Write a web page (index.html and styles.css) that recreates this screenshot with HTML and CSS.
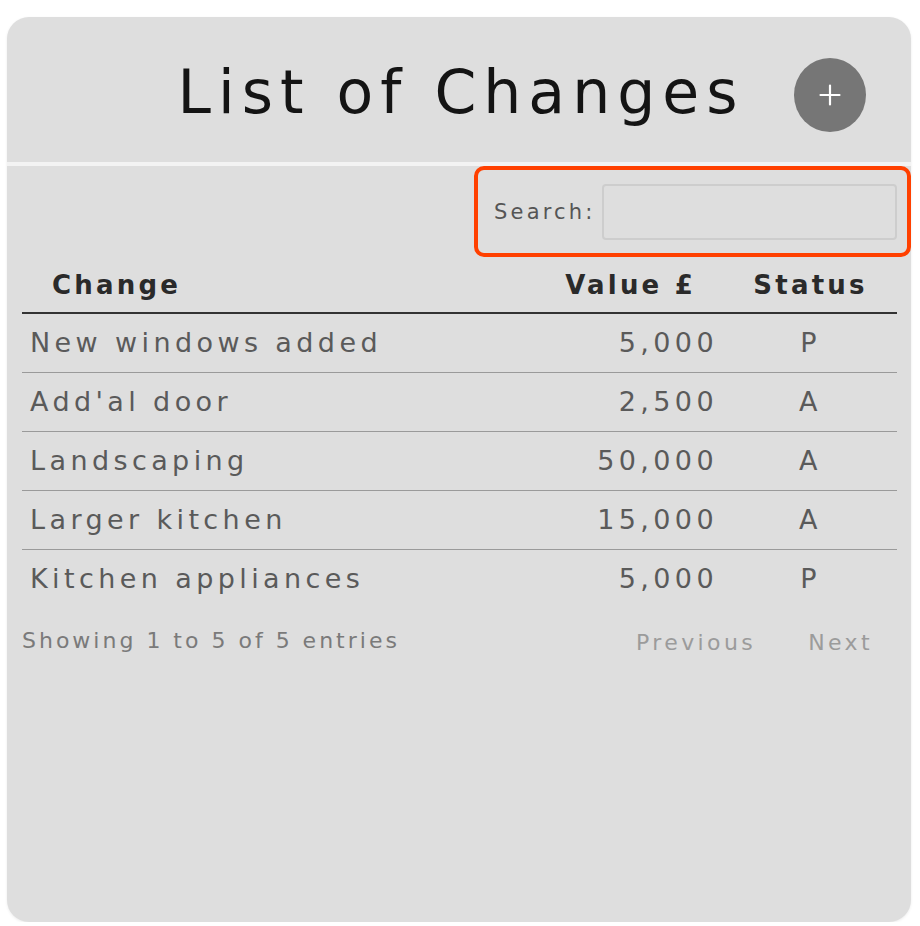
FILE: index.html
```html
<!DOCTYPE html>
<html>
<head>
<meta charset="utf-8">
<link rel="stylesheet" href="styles.css">
</head>
<body>
<div class="card">
  <header class="card-head">
    <div class="spacer"></div>
    <h1 class="title">List of Changes</h1>
    <div class="head-actions">
      <button class="add-btn" aria-label="Add">
        <svg width="24" height="24" viewBox="0 0 24 24"><path d="M12 2.5v19M2.5 12h19" stroke="#fff" stroke-width="2.2" stroke-linecap="round"/></svg>
      </button>
    </div>
  </header>
  <div class="search-row">
    <div class="search-box">
      <label class="search-label" for="q">Search:</label>
      <input id="q" class="search-input" type="text">
    </div>
  </div>
  <table class="changes">
    <thead>
      <tr>
        <th class="c-change">Change</th>
        <th class="c-value">Value £</th>
        <th class="c-status">Status</th>
      </tr>
    </thead>
    <tbody>
      <tr><td class="c-change">New windows added</td><td class="c-value">5,000</td><td class="c-status">P</td></tr>
      <tr><td class="c-change">Add'al door</td><td class="c-value">2,500</td><td class="c-status">A</td></tr>
      <tr><td class="c-change">Landscaping</td><td class="c-value">50,000</td><td class="c-status">A</td></tr>
      <tr><td class="c-change">Larger kitchen</td><td class="c-value">15,000</td><td class="c-status">A</td></tr>
      <tr><td class="c-change">Kitchen appliances</td><td class="c-value">5,000</td><td class="c-status">P</td></tr>
    </tbody>
  </table>
  <div class="table-foot">
    <div class="info">Showing 1 to 5 of 5 entries</div>
    <div class="pager">
      <span class="page-link prev">Previous</span>
      <span class="page-link next">Next</span>
    </div>
  </div>
</div>
</body>
</html>
```

FILE: styles.css
```css
* { box-sizing: border-box; }
html, body { margin: 0; padding: 0; background: #ffffff; }
body {
  font-family: "DejaVu Sans", "Liberation Sans", sans-serif;
  padding: 17px 0 0 7px;
}
.card {
  width: 904px;
  height: 905px;
  background: #dedede;
  border-radius: 22px;
  box-shadow: 0 1px 3px rgba(0,0,0,0.08);
  overflow: hidden;
}
.card-head {
  height: 149px;
  display: grid;
  grid-template-columns: 1fr auto 1fr;
  align-items: center;
  border-bottom: 4px solid #f3f3f3;
}
.title {
  margin: 0;
  font-weight: normal;
  font-size: 60px;
  letter-spacing: 7px;
  color: #141414;
  padding-left: 4px;
  padding-top: 4px;
}
.head-actions {
  display: flex;
  justify-content: flex-end;
  padding-right: 45px;
}
.add-btn {
  width: 72px;
  height: 74px;
  border-radius: 50%;
  border: none;
  background: #767676;
  display: flex;
  align-items: center;
  justify-content: center;
  padding: 0;
  margin-top: 10px;
}
.search-row {
  display: flex;
  justify-content: flex-end;
}
.search-box {
  width: 437px;
  height: 91px;
  border: 4px solid #ff4000;
  border-radius: 10px;
  display: flex;
  align-items: center;
  padding: 0 10px 0 16px;
}
.search-label {
  font-size: 21px;
  letter-spacing: 3.2px;
  color: #555;
  margin-right: 6px;
}
.search-input {
  flex: 1;
  height: 56px;
  border: 2px solid #cdcdcd;
  border-radius: 4px;
  background: #dedede;
}
.changes {
  margin-left: 15px;
  width: 875px;
  border-collapse: collapse;
}
.changes th {
  height: 56px;
  font-size: 26px;
  font-weight: bold;
  letter-spacing: 3.2px;
  color: #2a2a2a;
  border-bottom: 2px solid #333;
  padding: 0 8px;
}
.changes td {
  height: 59px;
  font-size: 27px;
  letter-spacing: 4.4px;
  color: #5a5a5a;
  padding: 0 8px;
  border-bottom: 1px solid #9a9a9a;
}
.changes tbody tr:last-child td { border-bottom: none; }
.changes th.c-change { text-align: left; padding-left: 30px; }
.changes th.c-value { text-align: right; padding-right: 28px; }
.changes th.c-status { text-align: center; width: 173px; }
.changes td.c-change { text-align: left; }
.changes td.c-value { text-align: right; padding-right: 6px; }
.changes td.c-status { text-align: center; }
.table-foot {
  display: flex;
  justify-content: space-between;
  align-items: center;
  margin: 0 38px 0 15px;
  height: 64px;
}
.info {
  font-size: 22px;
  letter-spacing: 3px;
  color: #7a7a7a;
}
.pager { display: flex; gap: 52px; padding-top: 4px; }
.page-link {
  font-size: 22px;
  letter-spacing: 3.4px;
  color: #9b9b9b;
}
```
